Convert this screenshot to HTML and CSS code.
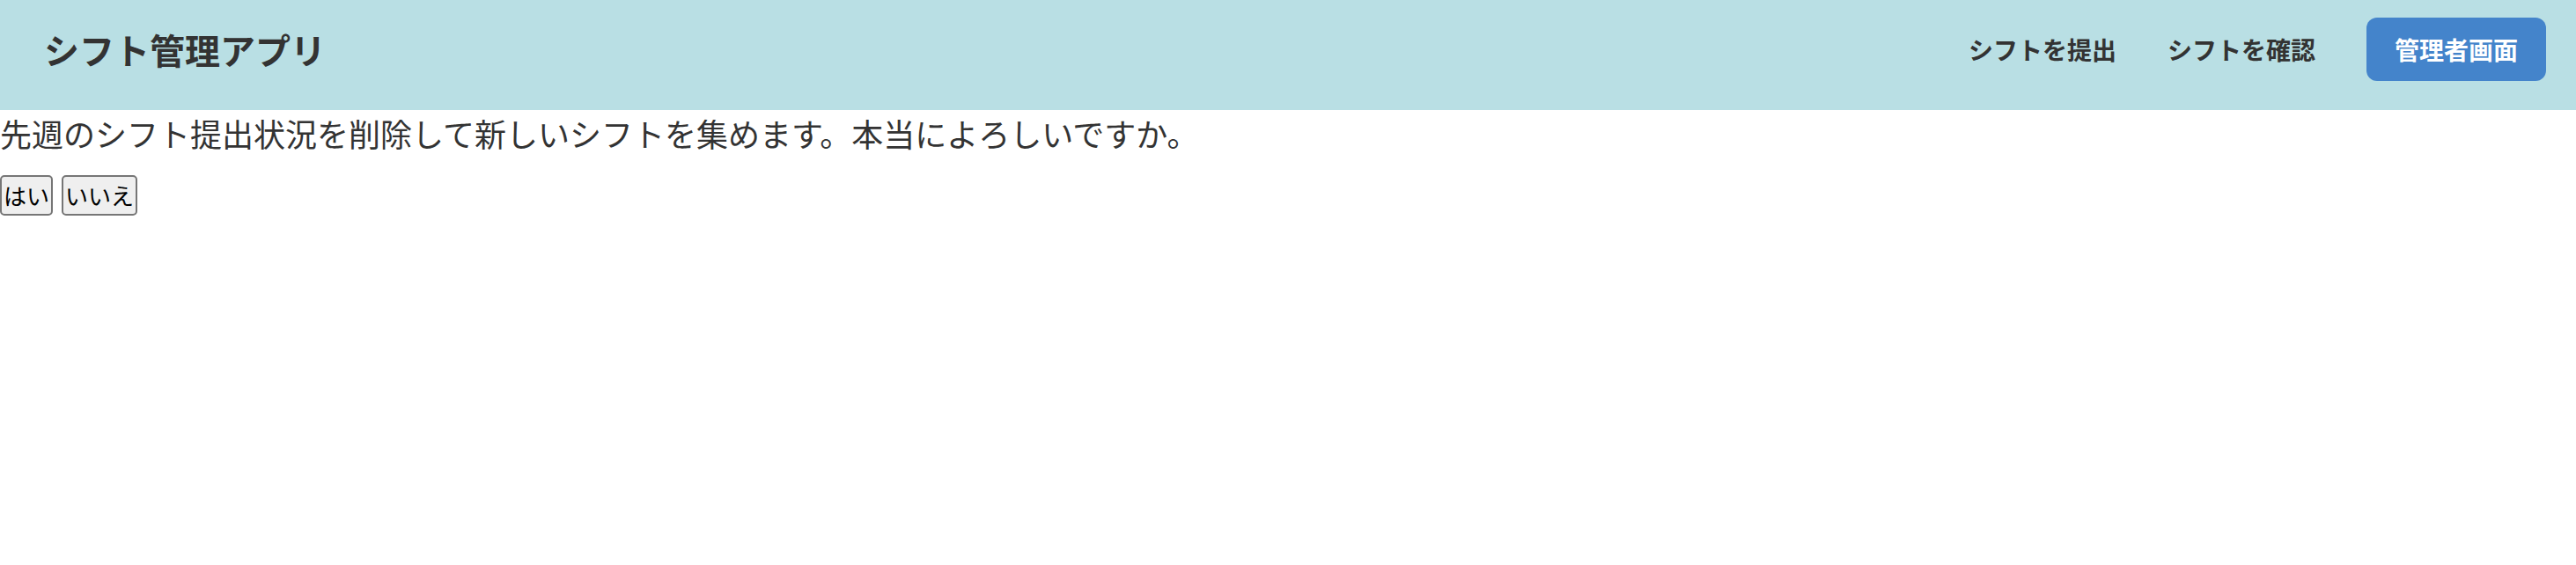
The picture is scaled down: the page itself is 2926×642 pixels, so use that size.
FILE: index.html
```html
<!DOCTYPE html>
<html lang="ja">
<head>
<meta charset="utf-8">
<title>シフト管理アプリ</title>
<link rel="stylesheet" href="styles.css">
</head>
<body>
<header class="site-header">
  <div class="brand">シフト管理アプリ</div>
  <nav class="nav">
    <a class="nav-link" href="#">シフトを提出</a>
    <a class="nav-link" href="#">シフトを確認</a>
    <a class="nav-button" href="#">管理者画面</a>
  </nav>
</header>
<main class="content">
  <p class="message">先週のシフト提出状況を削除して新しいシフトを集めます。本当によろしいですか。</p>
  <div class="actions">
    <button class="btn" type="button">はい</button>
    <button class="btn" type="button">いいえ</button>
  </div>
</main>
</body>
</html>
```

FILE: styles.css
```css
html, body {
  margin: 0;
  padding: 0;
  background: #ffffff;
  font-family: "Noto Sans CJK JP", "Noto Sans", sans-serif;
  color: #333333;
}

.site-header {
  box-sizing: border-box;
  height: 125px;
  background: #b9dfe4;
  display: flex;
  align-items: center;
  justify-content: space-between;
  padding: 0 34px 13px 50px;
}

.brand {
  font-size: 40px;
  font-weight: 700;
  color: #333333;
  line-height: 1;
}

.nav {
  display: flex;
  align-items: center;
  gap: 58px;
}

.nav-link {
  font-size: 28px;
  font-weight: 700;
  color: #333333;
  text-decoration: none;
  line-height: 1;
}

.nav-button {
  box-sizing: border-box;
  height: 72px;
  width: 204px;
  display: flex;
  align-items: center;
  justify-content: center;
  background: #4484cb;
  color: #ffffff;
  font-size: 28px;
  font-weight: 700;
  text-decoration: none;
  border-radius: 12px;
}

.content {
  padding: 0;
}

.message {
  margin: 0;
  font-size: 36px;
  line-height: 52px;
  color: #333333;
}

.actions {
  display: flex;
  gap: 10px;
  margin-top: 22px;
}

.btn {
  box-sizing: border-box;
  height: 46px;
  padding: 0 2px;
  font-family: "Noto Sans CJK JP", sans-serif;
  font-size: 26px;
  line-height: 1;
  color: #000000;
  background: #efefef;
  border: 2px solid #767676;
  border-radius: 5px;
}
```
